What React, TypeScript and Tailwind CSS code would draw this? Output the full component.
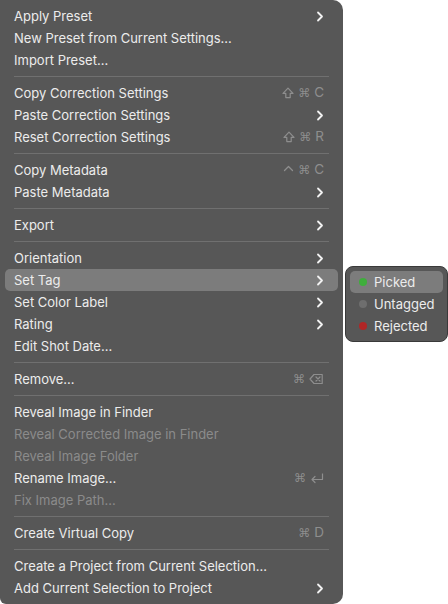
import type { ReactNode } from 'react';

type Item =
  | { kind: 'sep' }
  | {
      kind: 'item';
      label: string;
      disabled?: boolean;
      sub?: boolean;
      active?: boolean;
      keys?: ReactNode;
    };

const sep: Item = { kind: 'sep' };

function Chevron() {
  return (
    <svg width="8" height="11" viewBox="0 0 8 11" className="text-[#f2f2f2]">
      <path d="M2 1.5 L6 5.5 L2 9.5" fill="none" stroke="currentColor" strokeWidth="1.8" strokeLinecap="round" strokeLinejoin="round" />
    </svg>
  );
}

// modifier glyphs drawn to match the macOS menu symbols
function Shift() {
  return (
    <svg width="12" height="12" viewBox="0 0 12 12">
      <path d="M6 1.2 L11 6.4 H8.2 V10.6 H3.8 V6.4 H1 Z" fill="none" stroke="currentColor" strokeWidth="1.2" strokeLinejoin="round" />
    </svg>
  );
}

function Ctrl() {
  return (
    <svg width="11" height="12" viewBox="0 0 11 12">
      <path d="M1.5 6.5 L5.5 2.5 L9.5 6.5" fill="none" stroke="currentColor" strokeWidth="1.3" strokeLinecap="round" strokeLinejoin="round" />
    </svg>
  );
}

function Cmd() {
  return <span className="font-['DejaVu_Sans',sans-serif] text-[12px] leading-none">⌘</span>;
}

function Delete() {
  return (
    <svg width="15" height="12" viewBox="0 0 15 12">
      <path d="M5 1.5 H13.2 V10.5 H5 L1 6 Z" fill="none" stroke="currentColor" strokeWidth="1.2" strokeLinejoin="round" />
      <path d="M7 4 L11 8 M11 4 L7 8" stroke="currentColor" strokeWidth="1.2" strokeLinecap="round" />
    </svg>
  );
}

function Return() {
  return (
    <svg width="14" height="12" viewBox="0 0 14 12">
      <path d="M12.5 1.5 V7.5 H2" fill="none" stroke="currentColor" strokeWidth="1.2" strokeLinejoin="round" />
      <path d="M5 4.5 L2 7.5 L5 10.5" fill="none" stroke="currentColor" strokeWidth="1.2" strokeLinecap="round" strokeLinejoin="round" />
    </svg>
  );
}

function Keys({ children }: { children: ReactNode }) {
  return (
    <span className="flex items-center gap-[4px] text-[13.5px] leading-none text-[#8e8e8e]">{children}</span>
  );
}

const items: Item[] = [
  { kind: 'item', label: 'Apply Preset', sub: true },
  { kind: 'item', label: 'New Preset from Current Settings...' },
  { kind: 'item', label: 'Import Preset...' },
  sep,
  { kind: 'item', label: 'Copy Correction Settings', keys: <Keys><Shift /><Cmd /><span>C</span></Keys> },
  { kind: 'item', label: 'Paste Correction Settings', sub: true },
  { kind: 'item', label: 'Reset Correction Settings', keys: <Keys><Shift /><Cmd /><span>R</span></Keys> },
  sep,
  { kind: 'item', label: 'Copy Metadata', keys: <Keys><Ctrl /><Cmd /><span>C</span></Keys> },
  { kind: 'item', label: 'Paste Metadata', sub: true },
  sep,
  { kind: 'item', label: 'Export', sub: true },
  sep,
  { kind: 'item', label: 'Orientation', sub: true },
  { kind: 'item', label: 'Set Tag', sub: true, active: true },
  { kind: 'item', label: 'Set Color Label', sub: true },
  { kind: 'item', label: 'Rating', sub: true },
  { kind: 'item', label: 'Edit Shot Date...' },
  sep,
  { kind: 'item', label: 'Remove...', keys: <Keys><Cmd /><Delete /></Keys> },
  sep,
  { kind: 'item', label: 'Reveal Image in Finder' },
  { kind: 'item', label: 'Reveal Corrected Image in Finder', disabled: true },
  { kind: 'item', label: 'Reveal Image Folder', disabled: true },
  { kind: 'item', label: 'Rename Image...', keys: <Keys><Cmd /><Return /></Keys> },
  { kind: 'item', label: 'Fix Image Path...', disabled: true },
  sep,
  { kind: 'item', label: 'Create Virtual Copy', keys: <Keys><Cmd /><span>D</span></Keys> },
  sep,
  { kind: 'item', label: 'Create a Project from Current Selection...' },
  { kind: 'item', label: 'Add Current Selection to Project', sub: true },
];

const tags = [
  { label: 'Picked', color: 'bg-[#3fae3c]', active: true },
  { label: 'Untagged', color: 'bg-[#6e6e6e]' },
  { label: 'Rejected', color: 'bg-[#b02626]' },
];

export default function App() {
  return (
    <div className="relative h-[604px] w-[448px] overflow-hidden bg-white font-['Inter',sans-serif] text-[13px] antialiased">
      <div className="flex h-[604px] w-[343px] flex-col rounded-r-[10px] rounded-bl-[6px] bg-[#575757] py-[5px]">
        {items.map((it, i) =>
          it.kind === 'sep' ? (
            <div key={i} className="flex h-[11px] items-center px-[14px]">
              <div className="h-px w-full bg-[#707070]" />
            </div>
          ) : (
            <div
              key={i}
              className={`mx-[5px] flex h-[22px] items-center justify-between rounded-[5px] pl-[9px] pr-[14px] ${
                it.active ? 'bg-[#7c7c7c]' : ''
              } ${it.disabled ? 'text-[#8b8b8b]' : 'text-[#ececec]'}`}
            >
              <span className="pt-[2px]">{it.label}</span>
              {it.sub ? <Chevron /> : it.keys}
            </div>
          ),
        )}
      </div>

      <div className="absolute left-[345px] top-[266px] flex w-[103px] flex-col rounded-[8px] border border-[#3a3a3a] bg-[#575757] px-[4px] py-[4px]">
        {tags.map((t) => (
          <div
            key={t.label}
            className={`flex h-[22px] items-center gap-[7px] rounded-[5px] pl-[9px] text-[#ececec] ${t.active ? 'bg-[#7c7c7c]' : ''}`}
          >
            <span className={`h-[8px] w-[8px] rounded-full ${t.color}`} />
            <span className="pt-[2px]">{t.label}</span>
          </div>
        ))}
      </div>
    </div>
  );
}
